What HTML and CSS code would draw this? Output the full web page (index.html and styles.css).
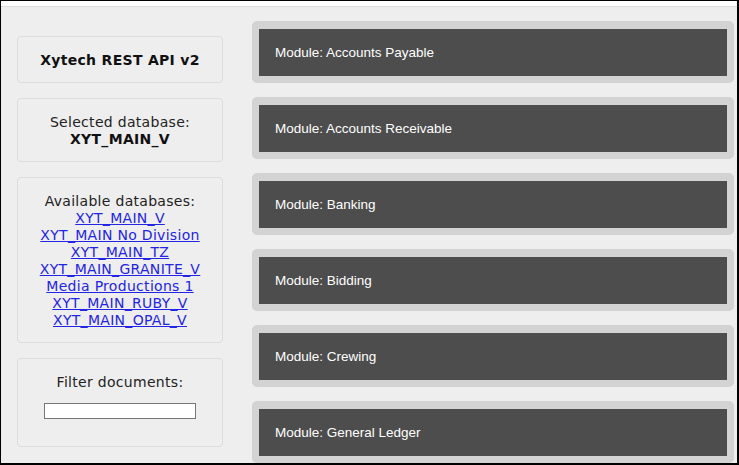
FILE: index.html
```html
<!DOCTYPE html>
<html lang="en">
<head>
<meta charset="utf-8">
<title>Xytech REST API v2</title>
<link rel="stylesheet" href="styles.css">
</head>
<body>
<div class="frame">
  <div class="topbar"></div>
  <div class="main">
    <aside class="sidebar">
      <div class="card title">Xytech REST API v2</div>
      <div class="card">Selected database:<br><b>XYT_MAIN_V</b></div>
      <div class="card">
        Available databases:<br>
        <a href="#">XYT_MAIN_V</a><br>
        <a href="#">XYT_MAIN No Division</a><br>
        <a href="#">XYT_MAIN_TZ</a><br>
        <a href="#">XYT_MAIN_GRANITE_V</a><br>
        <a href="#">Media Productions 1</a><br>
        <a href="#">XYT_MAIN_RUBY_V</a><br>
        <a href="#">XYT_MAIN_OPAL_V</a>
      </div>
      <div class="card">
        Filter documents:<br>
        <input class="filter" type="text">
      </div>
    </aside>
    <section class="modules">
      <div class="module"><div class="module-inner">Module: Accounts Payable</div></div>
      <div class="module"><div class="module-inner">Module: Accounts Receivable</div></div>
      <div class="module"><div class="module-inner">Module: Banking</div></div>
      <div class="module"><div class="module-inner">Module: Bidding</div></div>
      <div class="module"><div class="module-inner">Module: Crewing</div></div>
      <div class="module"><div class="module-inner">Module: General Ledger</div></div>
    </section>
  </div>
</div>
</body>
</html>
```
FILE: styles.css
```css
* { box-sizing: border-box; }
html, body { margin: 0; padding: 0; height: 100%; }
body { background: #eeeeee; }
.frame {
  height: 100%;
  border-style: solid;
  border-color: #000;
  border-width: 1px 2px 2px 1px;
  background: #eeeeee;
  overflow: hidden;
  display: flex;
  flex-direction: column;
}
.topbar {
  height: 6px;
  flex: none;
  background: #ffffff;
  border-bottom: 1px solid #dcdcdc;
}
.main {
  display: flex;
  align-items: flex-start;
  padding-left: 16px;
  padding-right: 3px;
}
.sidebar {
  width: 206px;
  flex: none;
  margin-top: 29px;
  display: flex;
  flex-direction: column;
  gap: 15px;
}
.card {
  border: 1px solid #dcdcdc;
  border-radius: 4px;
  padding: 15px 2px 13px;
  text-align: center;
  font-family: "DejaVu Sans", Verdana, sans-serif;
  font-size: 14px;
  line-height: 17px;
  letter-spacing: 0.3px;
  color: #222;
}
.card b { color: #111; }
.title { font-weight: bold; color: #111; }
.card a { color: #2424e6; text-decoration: underline; }
.filter {
  display: inline-block;
  width: 152px;
  height: 16px;
  margin: 12px 0 14px;
  border: 1px solid #767676;
  background: #fff;
  padding: 0;
  vertical-align: top;
}
.modules {
  flex: 1;
  margin-left: 29px;
  margin-top: 14px;
  display: flex;
  flex-direction: column;
  gap: 14px;
}
.module {
  background: #d3d3d3;
  border-radius: 5px;
  padding: 8px 7px 7px 7px;
}
.module-inner {
  background: #4d4d4d;
  height: 47px;
  display: flex;
  align-items: center;
  padding-left: 16px;
  font-family: "Liberation Sans", Arial, sans-serif;
  font-size: 13.5px;
  color: #ffffff;
}
```
